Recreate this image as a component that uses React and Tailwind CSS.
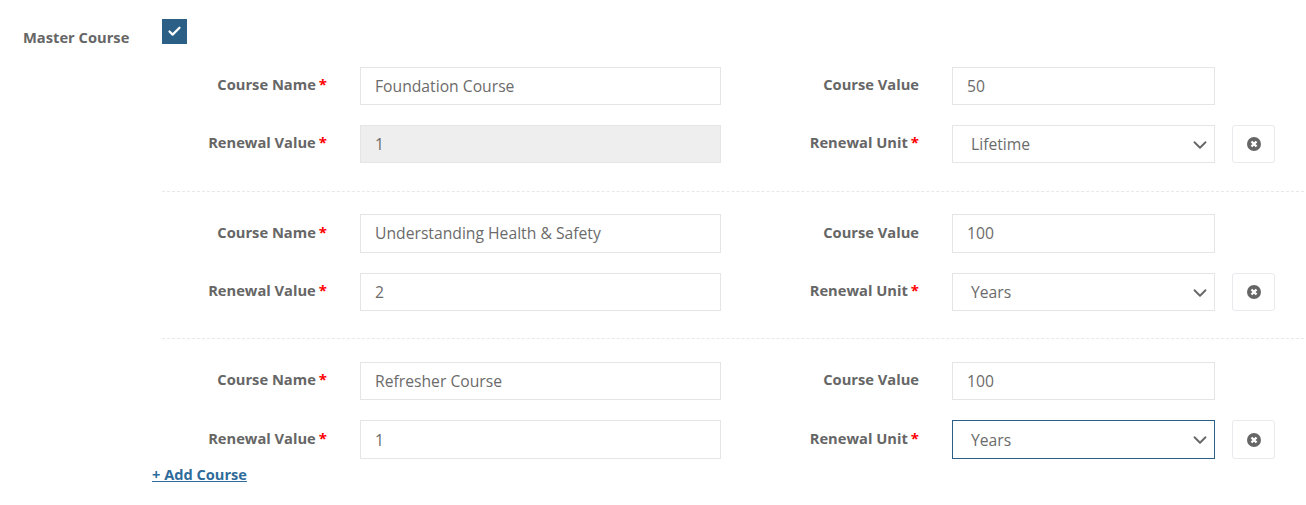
import React from 'react';
import { Check, ChevronDown } from 'lucide-react';

// row heights and paddings differ by a pixel between rows in the original
const courses = [
    { name: 'Foundation Course', value: '50', renewal: '1', unit: 'Lifetime', disabled: true, topH: 'h-[38px]', bottomH: 'h-[38px]', wrap: 'pt-[23px] pb-[28px] border-b border-dashed border-[#e8e8e8]' },
    { name: 'Understanding Health & Safety', value: '100', renewal: '2', unit: 'Years', topH: 'h-[39px] pb-[2px]', bottomH: 'h-[38px]', wrap: 'pt-[22px] pb-[27px] border-b border-dashed border-[#e8e8e8]' },
    { name: 'Refresher Course', value: '100', renewal: '1', unit: 'Years', focused: true, topH: 'h-[38px]', bottomH: 'h-[39px]', wrap: 'pt-[23px]' },
];

const Label = ({ text, required, width }) => (
    <label className={`${width} shrink-0 text-right text-[14.7px] leading-[20px] font-bold text-[#666666] -mt-[4px]`}>
        {text}
        {required && <span className="ml-[3px] text-[15px] text-[#ff0000]">*</span>}
    </label>
);

const inputClass = 'border px-[14px] text-[15.7px] text-[#6b6b6b] outline-none';

const CourseRow = ({ course }) => (
    <div className={course.wrap}>
        <div className="flex items-center">
            <Label text="Course Name" required width="w-[165px]" />
            <input readOnly value={course.name} className={`${inputClass} ${course.topH} border-[#e5e5e5] ml-[33px] w-[361px]`} />
            <Label text="Course Value" width="w-[198px]" />
            <input readOnly value={course.value} className={`${inputClass} ${course.topH} border-[#e5e5e5] ml-[33px] w-[263px]`} />
        </div>
        <div className="flex items-center mt-[20px]">
            <Label text="Renewal Value" required width="w-[165px]" />
            <input
                readOnly
                value={course.renewal}
                className={`${inputClass} ${course.bottomH} border-[#e5e5e5] ml-[33px] w-[361px] ${course.disabled ? 'bg-[#eeeeee]' : ''}`}
            />
            <Label text="Renewal Unit" required width="w-[198px]" />
            <div className="relative ml-[33px] w-[263px]">
                <select
                    value={course.unit}
                    onChange={() => {}}
                    className={`${inputClass} ${course.bottomH} w-full appearance-none bg-white pl-[18px] pt-[2px] ${course.focused ? 'border-[#2b5f86]' : 'border-[#e5e5e5]'}`}
                >
                    <option value="Lifetime">Lifetime</option>
                    <option value="Years">Years</option>
                </select>
                <ChevronDown className="absolute right-[4px] top-[9px] text-[#666666] pointer-events-none" size={22} strokeWidth={2} />
            </div>
            <button className={`ml-[17px] flex ${course.bottomH} w-[43px] items-center justify-center rounded-[3px] border border-[#e8eaed] bg-white`}>
                <svg width="14" height="14" viewBox="0 0 14 14">
                    <circle cx="7" cy="7" r="7" fill="#666666" />
                    <path d="M4.5 4.5 9.5 9.5M9.5 4.5 4.5 9.5" stroke="#ffffff" strokeWidth="2.4" />
                </svg>
            </button>
        </div>
    </div>
);

const App = () => {
    return (
        <div className="h-[505px] w-[1306px] overflow-hidden bg-white pt-[19px] font-['Open_Sans',sans-serif]">
            <div className="flex h-[25px]">
                <span className="ml-[23px] mt-[8px] w-[139px] text-[14.7px] leading-[20px] font-bold text-[#666666]">Master Course</span>
                <div className="flex h-[25px] w-[25px] items-center justify-center bg-[#2b5f86]">
                    <Check className="text-white" size={15} strokeWidth={3.5} />
                </div>
            </div>

            <div className="ml-[162px] mr-[2px]">
                {courses.map((course) => (
                    <CourseRow key={course.name} course={course} />
                ))}
            </div>

            <a href="#" className="ml-[152px] mt-[5px] block w-fit text-[14.6px] leading-[20px] font-bold text-[#2f6c9b] underline">
                + Add Course
            </a>
        </div>
    );
};

export default App;
